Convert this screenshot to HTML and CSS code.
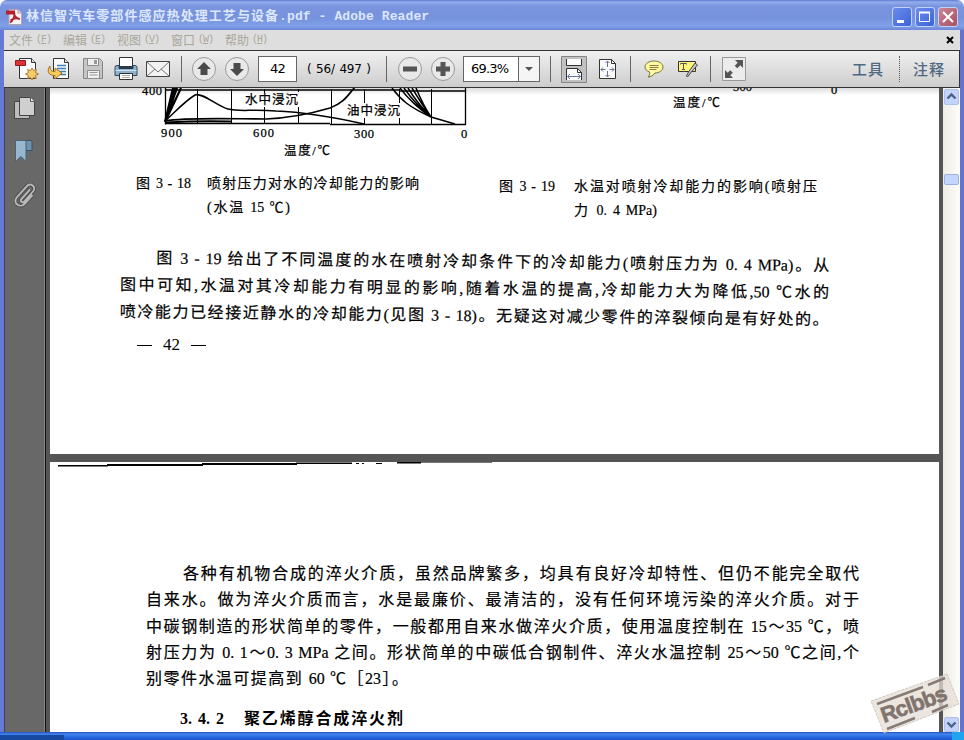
FILE: index.html
```html
<!DOCTYPE html>
<html lang="zh-CN">
<head>
<meta charset="utf-8">
<title>林信智汽车零部件感应热处理工艺与设备.pdf - Adobe Reader</title>
<link rel="stylesheet" href="styles.css">
</head>
<body>
<div class="window">
  <header class="titlebar">
    <svg class="app-icon" width="16" height="16" viewBox="0 0 16 16"><path d="M3 .5h9l3.500 3.500v11.500H3z" fill="#f6f3f3" stroke="#b6a0ae"/><path d="M12 .5V4h3.500" fill="#d8cfd8" stroke="#b6a0ae"/><path d="M0 1.500h9v4H0z" fill="#b3202c"/><path d="M7.500 3.500c1 3.500 3 6 6 6.500M8.500 4c0 4-2 8-4.500 9.500M4.500 11.500c3-2.500 6-2.500 9.500-1.500" fill="none" stroke="#b3202c" stroke-width="1.800"/></svg>
    <h1 class="title">林信智汽车零部件感应热处理工艺与设备<span class="title-latin">.pdf - Adobe Reader</span></h1>
    <div class="controls">
      <span class="ctl"><svg width="20" height="20"><path d="M5 13h7v3H5z" fill="#fff"/></svg></span>
      <span class="ctl"><svg width="20" height="20"><path d="M4.500 5.500h10v9h-10z" fill="none" stroke="#fff"/><path d="M4 4.500h11v2H4z" fill="#fff"/></svg></span>
      <span class="ctl close"><svg width="20" height="20"><path d="M5 5l10 10M15 5L5 15" stroke="#fff" stroke-width="2"/></svg></span>
    </div>
  </header>
  <div class="lower">
    <nav class="menubar">
      <span class="menu">文件<i>(<u>F</u>)</i></span>
      <span class="menu">编辑<i>(<u>E</u>)</i></span>
      <span class="menu">视图<i>(<u>V</u>)</i></span>
      <span class="menu">窗口<i>(<u>W</u>)</i></span>
      <span class="menu">帮助<i>(<u>H</u>)</i></span>
      <svg class="doc-close" width="8" height="8"><path d="M1 1l6 6M7 1L1 7" stroke="#000" stroke-width="2"/></svg>
    </nav>
    <div class="toolbar">
      <div class="tools">
        <svg class="t-create" width="24" height="24" viewBox="0 0 24 24"><path d="M4.500 1.500h12l4 4v16h-16z" fill="#fafafa" stroke="#333"/><path d="M16.500 1.500v4h4" fill="#ddd" stroke="#333"/><path d="M.5 3.500h10v5H.5z" fill="#e02f35" stroke="#8d1c22"/><path d="M17 11l1.500 2.600 2.800-1-.8 2.900 3 1.500-3 1.500.8 2.900-2.800-1L17 23l-1.500-2.600-2.800 1 .8-2.900-3-1.500 3-1.500-.8-2.900 2.800 1z" fill="#f6cd6c" stroke="#b27b26"/></svg>
        <svg class="t-open" width="24" height="24" viewBox="0 0 24 24"><path d="M6.500 1.500h11l4 4v16h-15z" fill="#fafafa" stroke="#333"/><path d="M17.500 1.500v4h4" fill="#ddd" stroke="#333"/><path d="M10 8.500h9M10 11.500h9M10 14.500h9M13 17.500h6" stroke="#3c7ebb" stroke-width="1.300"/><path d="M3 9C-1 14 2 19 8 18.500V22l7-6-7-5v3.500C4.500 15 3 13 3 9z" fill="#f6c958" stroke="#9e7328"/></svg>
        <svg class="t-save" width="24" height="24" viewBox="0 0 24 24"><path d="M2.500 1.500h16l3 3v17h-19z" fill="#c6c6c6" stroke="#858585"/><path d="M6.500 1.500h11v7h-11zM6.500 13.500h12v8h-12z" fill="#efefef" stroke="#8c8c8c"/><path d="M13 3h3v4h-3z" fill="#999"/><path d="M8.500 15.500h8M8.500 18h8" stroke="#999"/></svg>
        <svg class="t-print" width="24" height="24" viewBox="0 0 24 24"><path d="M5.500.5h13v10h-13z" fill="#fff" stroke="#333"/><path d="M1 10.500q0-2 2-2h2v3h14v-3h2q2 0 2 2v8H1z" fill="#8fb2cf" stroke="#34485b"/><path d="M5 9h14v3H5z" fill="#283949"/><path d="M1.500 13.500h21" stroke="#d1e2ee"/><path d="M5.500 16.500h13v6h-13z" fill="#fff" stroke="#333"/><path d="M8 18.500h8M8 20.500h8" stroke="#aaa"/></svg>
        <svg class="t-mail" width="26" height="18" viewBox="0 0 26 18"><path d="M1.500 1.500h23v15h-23z" fill="#f3f3f3" stroke="#444"/><path d="M2 2l11 10L24 2M2 16l8-7M24 16l-8-7" fill="none" stroke="#777"/></svg>
        <b class="sep"></b>
        <svg class="t-up" width="24" height="24"><circle class="round" cx="12" cy="12" r="11.500"/><path d="M12 5l7 7h-3.500v6h-7v-6H5z" fill="#4b4b4b"/></svg>
        <svg class="t-down" width="24" height="24"><circle class="round" cx="12" cy="12" r="11.500"/><path d="M12 19l7-7h-3.500V6h-7v6H5z" fill="#4b4b4b"/></svg>
        <span class="field page-no">42</span>
        <span class="page-count">( 56/ 497 )</span>
        <b class="sep"></b>
        <svg class="t-minus" width="24" height="24"><circle class="round" cx="12" cy="12" r="11.500"/><path d="M5 9.500h14v5H5z" fill="#555"/></svg>
        <svg class="t-plus" width="24" height="24"><circle class="round" cx="12" cy="12" r="11.500"/><path d="M9.500 5h5v4.500H19v5h-4.500V19h-5v-4.500H5v-5h4.500z" fill="#555"/></svg>
        <span class="field zoom"><span class="zoom-value">69.3%</span><span class="zoom-arrow"></span></span>
        <b class="sep"></b>
        <svg class="t-width" width="26" height="27"><path d="M.5.500h25v26H.5z" fill="#c1c1c1" stroke="#858585"/><path d="M5.500 3v6.500h15V3" fill="#fafafa" stroke="#333"/><path d="M5.500 24V12.500h11l4 4V24" fill="#fafafa" stroke="#333"/><path d="M16.500 12.500v4h4" fill="none" stroke="#333"/><path d="M7 20.500h12M9 18l-2.500 2.500L9 23M17 18l2.500 2.500L17 23" fill="none" stroke="#6772a0"/></svg>
        <svg class="t-fit" width="18" height="20"><path d="M.5.500h12l4 4v15H.5z" fill="#fafafa" stroke="#333"/><path d="M12.500.500v4h4" fill="none" stroke="#333"/><path d="M8.500 2v6M8.500 12v6M2 10.500h4.500M10.500 10.500H15M6.500 4l2-2 2 2M6.500 16l2 2 2-2M4 8.500l-2 2 2 2M13 8.500l2 2-2 2" fill="none" stroke="#6772a0"/></svg>
        <b class="sep"></b>
        <svg class="t-note" width="20" height="18"><path d="M10 1c5 0 9 2.500 9 6s-4 6-8 6c-2 2.500-4 4-7 4 1.500-1 2-3 1.500-5C3 11 1 9.500 1 7c0-3.500 4-6 9-6z" fill="#fff9a4" stroke="#77713d"/><path d="M5.500 5.500h9M5.500 7.500h9M5.500 9.500h7" stroke="#8b7c3a"/></svg>
        <svg class="t-text" width="21" height="18"><path d="M1.500 1.500h17v10h-17z" fill="#fff67b" stroke="#333"/><path d="M3.500 4.500V3.500h6v1M6.500 3.500v6M5 9.500h3" fill="none" stroke="#555"/><path d="M18 3l2.500 2-7 8-3 4-1-1 2-4z" fill="#c8c8c8" stroke="#444"/></svg>
        <b class="sep"></b>
        <svg class="t-full" width="24" height="24"><path d="M.5.500h23v23H.5z" fill="#ececec" stroke="#999"/><path d="M21 3v8l-2.700-2.700-3 3-2.600-2.600 3-3L13 3zM3 21v-8l2.700 2.700 2.500-2.500 2.600 2.600-2.500 2.500L11 21z" fill="#555"/></svg>
      </div>
      <div class="panes"><span class="pane">工具</span><span class="pane pane-comment">注释</span></div>
    </div>
    <div class="main">
      <aside class="sidebar">
        <svg width="22" height="24"><path d="M.5 5.500h15v17H.5z" fill="#bcbcbc" stroke="#444"/><path d="M5.500 1.500h11l4 4v14h-15z" fill="#cfcfcf" stroke="#444"/><path d="M16.500 1.500v4h4" fill="#eee" stroke="#555"/></svg>
        <svg width="20" height="24"><path d="M10 1.500h7q1 0 1 1v9h-6z" fill="#6e93b0" stroke="#3b5265"/><path d="M1.500 1.500H12v21l-5-5-5.500 5z" fill="#98b6cd" stroke="#496274"/></svg>
        <svg width="22" height="26"><path d="M16 7.500L7.500 17c-2 2.300 1 4.500 2.800 2.500L19 9.500c4-4.500-2.500-9.500-6.500-5L3 15c-5 6 3 12 8 6.500l7.500-8.500" fill="none" stroke="#474747" stroke-width="3.500"/><path d="M16 7.500L7.500 17c-2 2.300 1 4.500 2.800 2.500L19 9.500c4-4.500-2.500-9.500-6.500-5L3 15c-5 6 3 12 8 6.500l7.500-8.500" fill="none" stroke="#b8b8b8" stroke-width="1.900"/></svg>
      </aside>
      <main class="document">
        <section class="page page-42">
          <svg class="chart" width="889" height="72" viewBox="50 88 889 72">
            <g fill="none" stroke="#000">
              <path d="M165.500 88v36.500M165 90H399M399 91h66.500M465.500 88v36.500" stroke-width="1.300"/>
              <path d="M165 123.500h165M330 124.500h136" stroke-width="1.300"/>
              <path d="M197.500 89v35M231.500 89v35M264.500 89v4M264.500 107v17M298.500 89v3M298.500 107v17M331.500 89v35M364.500 89v14M364.500 118v6M399.500 89v14M399.500 118v6M431.500 89v35"/>
              <path d="M165 122l8-34M165 122l10-34M165 122l12-34M165 122l16-34" stroke-width="2.200"/>
              <path d="M165 121c9-8 20-20 30-26 7-3 22 11 33 14s24 0 48 2c28 1 57 6 88 13" stroke-width="1.500"/>
              <path d="M165 121c22-4 68-2 101-2 22-1 47-6 64-11 14-5 18-13 25-21" stroke-width="1.700"/>
              <path d="M165 122.500q35-2 66-1" stroke-width="2"/>
              <path d="M392 88c9 12 17 19 39 29l24 7M400 88q12 16 31 29M404 88q12 17 27 29M408 88q9 15 23 29M412 88q9 15 19 29M416 88q7 17 15 29" stroke-width="1.500"/>
            </g>
            <g class="chart-text">
              <text x="142" y="95" textLength="20">400</text>
              <text x="161" y="137" textLength="21">900</text>
              <text x="253" y="137" textLength="21">600</text>
              <text x="354" y="138" textLength="20">300</text>
              <text x="461" y="138">0</text>
              <text x="245" y="104" textLength="53">水中浸沉</text>
              <text x="347" y="115" textLength="53">油中浸沉</text>
              <text x="284" y="155" textLength="46">温度/℃</text>
              <text x="673" y="107" textLength="47">温度/℃</text>
              <text x="733" y="91" textLength="19">300</text>
              <text x="831" y="94">0</text>
            </g>
          </svg>
          <div class="captions">
            <div class="caption left"><span class="fig">图 3 - 18</span><div><p class="cap-1">喷射压力对水的冷却能力的影响</p><p class="cap-2">(水温 15 ℃)</p></div></div>
            <div class="caption right"><span class="fig">图 3 - 19</span><div><p class="cap-3">水温对喷射冷却能力的影响(喷射压</p><p class="cap-4">力 0. 4 MPa)</p></div></div>
          </div>
          <div class="para tilted">
            <p class="line first">图 3 - 19 给出了不同温度的水在喷射冷却条件下的冷却能力(喷射压力为 0. 4 MPa)。从</p>
            <p class="line">图中可知,水温对其冷却能力有明显的影响,随着水温的提高,冷却能力大为降低,50 ℃水的</p>
            <p class="line">喷冷能力已经接近静水的冷却能力(见图 3 - 18)。无疑这对减少零件的淬裂倾向是有好处的。</p>
          </div>
          <div class="folio"><i></i><span>42</span><i></i></div>
        </section>
        <section class="page page-43">
          <svg class="scan-edge" width="442" height="6"><path d="M8 3h50v1.500H8zM57 2h96v2H57zM152 1h95v2h-95zM246 .5h56v1.500h-56zM306 1h3v1h-3zM312 1h2v1h-2zM326 1h6v1h-6zM347 0h24v1.500h-24zM376 0h10v1h-10z"/><path d="M371 .5h71" stroke="#777"/></svg>
          <div class="para second">
            <p class="line indent">各种有机物合成的淬火介质，虽然品牌繁多，均具有良好冷却特性、但仍不能完全取代</p>
            <p class="line">自来水。做为淬火介质而言，水是最廉价、最清洁的，没有任何环境污染的淬火介质。对于</p>
            <p class="line">中碳钢制造的形状简单的零件，一般都用自来水做淬火介质，使用温度控制在 15～35 ℃，喷</p>
            <p class="line">射压力为 0. 1～0. 3 MPa 之间。形状简单的中碳低合钢制件、淬火水温控制 25～50 ℃之间,个</p>
            <p class="line last">别零件水温可提高到 60 ℃［23］。</p>
          </div>
          <h2 class="heading"><span>3. 4. 2</span><span class="heading-text">聚乙烯醇合成淬火剂</span></h2>
        </section>
      </main>
      <div class="scrollbar">
        <span class="sb-btn"><svg width="15" height="15"><path d="M3.500 9.500l4-4 4 4" fill="none" stroke="#4d6185" stroke-width="2.400"/></svg></span>
        <span class="thumb"></span>
        <span class="sb-btn bottom"><svg width="15" height="15"><path d="M3.500 5.500l4 4 4-4" fill="none" stroke="#4d6185" stroke-width="2.400"/></svg></span>
      </div>
    </div>
  </div>
  <footer class="taskbar"><span class="start"></span><span class="tray"></span></footer>
  <svg class="stamp" width="96" height="64" viewBox="868 672 96 64">
    <path d="M871 701l76-27 12 30-75 29z" fill="#e6ded6" fill-opacity=".75" stroke="#c8beb6" stroke-opacity=".8" stroke-dasharray="3 1"/>
    <path d="M877 704l46-17M928 685l17-7M887 729l28-11M932 712l16-7" stroke="#877b76" stroke-width="2.500"/>
    <text x="884" y="723" textLength="69" transform="rotate(-20 884 723)">Rclbbs</text>
  </svg>
</div>
</body>
</html>
```
FILE: styles.css
```css
* { box-sizing: border-box; }
body { margin: 0; overflow: hidden; background: #fff; }
p, h1, h2 { margin: 0; white-space: nowrap; }
svg { display: block; flex: none; }

.window {
  position: relative;
  width: 964px;
  height: 740px;
  display: flex;
  flex-direction: column;
  overflow: hidden;
  border-radius: 7px 7px 0 0;
  font-family: "Liberation Serif", "Noto Sans CJK SC", serif;
}
.titlebar {
  height: 30px;
  flex: none;
  display: flex;
  align-items: center;
  padding: 3px 6px 0;
  background: linear-gradient(#5d79cf 0, #93aeec 2px, #7a94df 6px, #7792de 18px, #80a0e8 26px, #6d86d8 30px);
}
.title {
  margin-left: 4px;
  font: bold 13px/18px "Liberation Mono", "Noto Sans CJK SC", monospace;
  letter-spacing: 1.06px;
  color: #dce7fc;
}
.title-latin { letter-spacing: .1px; }
.controls { display: flex; gap: 3px; margin-left: auto; }
.ctl {
  width: 20px;
  height: 20px;
  border: 1px solid #c2d2fa;
  border-radius: 3px;
  background: linear-gradient(135deg, #6d8cec, #3b63db);
}
.ctl svg { margin: -1px; }
.close { background: linear-gradient(135deg, #c98797, #a94f61); }

.lower {
  flex: 1;
  min-height: 0;
  display: flex;
  flex-direction: column;
  border: solid #6473cf;
  border-width: 0 4px;
  border-left-color: #6579d5;
}
.menubar {
  height: 20px;
  flex: none;
  display: flex;
  gap: 13px;
  padding: 0 6px 0 5px;
  background: #dedede;
  color: #aaa69a;
  font: 12px/20px "Noto Sans CJK SC", sans-serif;
}
.menu { width: 41px; display: flex; gap: 3px; white-space: nowrap; }
.menu i { font: 10px/20px "Liberation Mono", monospace; letter-spacing: -1px; }
.doc-close { margin: 6px 0 0 auto; }

.toolbar {
  height: 38px;
  flex: none;
  display: flex;
  justify-content: space-between;
  align-items: center;
  border: solid #333;
  border-width: 1px 1px 1px 0;
  background: linear-gradient(#f0f0f0, #cdcdcd);
}
.tools { display: flex; align-items: center; padding-left: 11px; }
.round { fill: #e9e9e9; stroke: #999; }
.sep { width: 1px; height: 26px; background: #666; }
.t-open { margin-left: 8px; }
.t-save { margin-left: 10px; }
.t-print { margin-left: 9px; }
.t-mail { margin: 0 10px 0 7px; }
.t-up { margin-left: 10px; }
.t-down { margin-left: 9px; }
.field {
  height: 26px;
  border: 1px solid #666;
  background: #fff;
  font: 13px/24px "DejaVu Sans", sans-serif;
  letter-spacing: -.8px;
}
.page-no { width: 39px; margin-left: 9px; text-align: center; }
.page-count {
  width: 66px;
  margin: 0 13px 0 10px;
  white-space: nowrap;
  font: 12px/26px "DejaVu Sans", sans-serif;
  word-spacing: 1px;
  letter-spacing: -.2px;
}
.t-minus { margin-left: 11px; }
.t-plus { margin: 0 8px 0 9px; }
.zoom { width: 77px; margin-right: 10px; display: flex; padding-left: 7px; }
.zoom-value { width: 47px; }
.zoom-arrow { flex: 1; border-left: 1px solid #666; background: #f5f5f5; }
.zoom-arrow::before {
  content: "";
  display: block;
  margin: 10px 0 0 6px;
  width: 0;
  border: 4px solid transparent;
  border-top-color: #555;
}
.t-width { margin-left: 10px; }
.t-fit { margin: 0 13px 0 12px; }
.t-note { margin-left: 13px; }
.t-text { margin: 0 12px 0 13px; }
.t-full { margin-left: 11px; }
.panes { display: flex; align-items: center; padding-right: 13px; }
.pane {
  width: 47px;
  font: 500 15px/26px "Noto Sans CJK SC", sans-serif;
  letter-spacing: 1px;
  color: #4e6882;
  white-space: nowrap;
}
.pane-comment { padding-left: 13px; border-left: 1px dotted #555; }

.main { flex: 1; min-height: 0; display: flex; background: #555; }
.sidebar {
  width: 42px;
  display: flex;
  flex-direction: column;
  align-items: flex-start;
  gap: 19px;
  padding: 8px 0 0 9px;
  border-left: 1px solid #3f4060;
  border-right: 1px solid #111;
  background: #686868;
  box-shadow: inset -1px 0 #858585;
}
.document { width: 889px; margin: 0 4px; display: flex; flex-direction: column; gap: 8px; }
.page { background: #fff; overflow: hidden; color: #000; }
.page-42 { height: 366px; flex: none; background: linear-gradient(#ddd, #fff 7px); }
.page-43 { flex: 1; min-height: 0; }
.chart-text { font-size: 12.500px; stroke: #000; stroke-width: .25px; }

.captions { display: flex; padding: 12px 0 0 86px; font-size: 14px; }
.caption { display: flex; line-height: 24px; }
.caption p, .fig, .line { text-align-last: justify; -webkit-text-stroke: .2px #000; }
.fig { width: 55px; white-space: nowrap; }
.left { width: 363px; gap: 16px; }
.right { padding-top: 3px; gap: 19px; }
.right .fig { width: 56px; }
.cap-1 { width: 212px; }
.cap-2 { width: 83px; }
.cap-3 { width: 243px; }
.cap-4 { width: 83px; }

.para { font-size: 16px; }
.tilted { width: 709px; margin: 25px 0 0 70px; transform: rotate(.65deg); }
.tilted .line { line-height: 27px; }
.first { margin-left: 36px; }
.folio { display: flex; align-items: center; gap: 11px; padding: 6px 0 0 87px; font-size: 17px; line-height: 20px; }
.folio i { width: 15px; height: 1px; background: #000; }

.second { width: 713px; margin: 93px 0 0 96px; }
.second .line { line-height: 26.300px; }
.indent { margin-left: 37px; }
.last { width: 262px; }
.heading { display: flex; gap: 20px; margin: 13px 0 0 130px; font-size: 16px; line-height: 28px; }
.heading span { width: 44px; text-align-last: justify; }
.heading .heading-text { width: 159px; }

.scrollbar { flex: 1; display: flex; flex-direction: column; align-items: center; background: linear-gradient(90deg, #eeede5, #fdfdfa); }
.sb-btn { width: 15px; height: 16px; margin-top: 1px; border-radius: 2px; background: #c3d3fb; border: 1px solid #aebfea; }
.sb-btn svg { margin: -1px; }
.thumb { width: 15px; height: 11px; margin-top: 69px; border: 1px solid #9db2e3; border-radius: 2px; background: #c5d6fc; }
.bottom { margin: auto 0 0; height: 15px; }

.taskbar { height: 8px; flex: none; display: flex; justify-content: space-between; background: linear-gradient(#234eb9, #4285ee 2px, #286ae0 5px, #1d51ca); }
.start { width: 64px; height: 5px; margin-top: 3px; background: #1749a1; }
.tray { width: 12px; background: #20a4ef; }

.stamp { position: absolute; right: 0; bottom: 4px; font: bold 22px "Liberation Sans", sans-serif; }
.stamp text { fill: #81746f; stroke: #81746f; stroke-width: .6px; }
```
